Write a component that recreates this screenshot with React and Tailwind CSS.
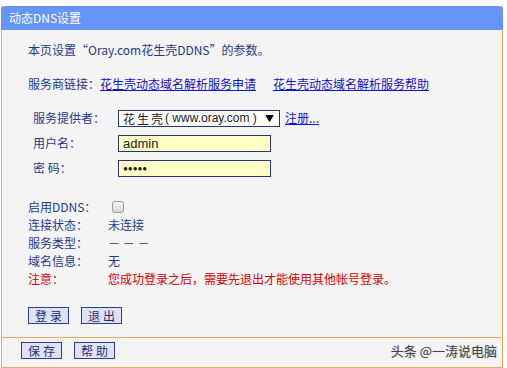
import React from 'react'

const FONT = { fontFamily: '"Noto Sans CJK SC", "DejaVu Sans", sans-serif' }
const ARIAL = { fontFamily: '"Liberation Sans", Arial, sans-serif' }

const STATUS = [
  { label: '连接状态：', value: '未连接' },
  { label: '服务类型：', value: '－ － －' },
  { label: '域名信息：', value: '无' },
]

function Btn({ children }) {
  return (
    <button
      type="button"
      className="w-[41px] h-[17px] border border-[#2b3f8c] bg-[#dfe2f7] text-[12px] leading-[15px] text-[#1f2f6e] tracking-[3px] pl-[3px]"
    >
      {children}
    </button>
  )
}

function FieldRow({ label, children, className = '' }) {
  return (
    <div className={`flex items-center pl-[5px] ${className}`}>
      <span className="w-[85px] shrink-0">{label}</span>
      {children}
    </div>
  )
}

export default function App() {
  return (
    <div className="w-[507px] h-[368px] bg-white pt-[6px] pl-px" style={FONT}>
      <div className="w-[502px] border-x border-b border-[#f0a860] bg-[#f4f4f4] text-[12px] text-[#1d3a8a]">
        {/* Titulo */}
        <div className="h-[24px] -mx-px bg-[#6495f7] rounded-t-[4px] pl-[8px] leading-[24px] text-white">
          动态DNS设置
        </div>

        <div className="px-[26px] leading-[18px]">
          <p className="mt-[11px]">本页设置“Oray.com花生壳DDNS”的参数。</p>

          <p className="mt-[16px] flex">
            <span>服务商链接：</span>
            <a className="text-[#1010c8] underline">花生壳动态域名解析服务申请</a>
            <a className="ml-[17px] text-[#1010c8] underline">花生壳动态域名解析服务帮助</a>
          </p>

          {/* Formulario */}
          <FieldRow label="服务提供者：" className="mt-[16px]">
            <div className="w-[162px] h-[17px] border border-[#24357a] bg-white flex items-center pl-[4px] pr-[5px] leading-[15px] text-[#222] whitespace-nowrap overflow-hidden">
              <span className="text-[12px] tracking-[2px]">花生壳</span>
              <span className="text-[12px]" style={ARIAL}>( www.oray.com )</span>
              <span className="ml-auto text-[9px] text-black">▼</span>
            </div>
            <a className="ml-[5px] text-[#1010c8] underline">注册...</a>
          </FieldRow>
          <FieldRow label="用户名：" className="mt-[7px]">
            <div
              className="w-[153px] h-[17px] border border-[#24357a] bg-[#ffffc4] pl-[4px] text-[13px] leading-[15px] text-[#222]"
              style={ARIAL}
            >
              admin
            </div>
          </FieldRow>
          <FieldRow label="密  码：" className="mt-[7px]">
            <div
              className="w-[153px] h-[17px] border border-[#24357a] bg-[#ffffc4] pl-[4px] text-[8px] leading-[15px] text-[#222]"
              style={ARIAL}
            >
              ●●●●●
            </div>
          </FieldRow>

          {/* Estado */}
          <div className="mt-[21px]">
            <div className="flex items-center">
              <span className="w-[84px]">启用DDNS：</span>
              <span className="w-[12px] h-[12px] rounded-[3px] border border-[#9a9a9a] bg-gradient-to-b from-[#f6f6f6] to-[#d8d8d8]" />
            </div>
            {STATUS.map(s => (
              <div key={s.label} className="flex">
                <span className="w-[80px]">{s.label}</span>
                <span>{s.value}</span>
              </div>
            ))}
            <div className="flex text-[#d40000]">
              <span className="w-[80px]">注意：</span>
              <span>您成功登录之后，需要先退出才能使用其他帐号登录。</span>
            </div>
          </div>

          <div className="mt-[19px] pb-[13px] flex gap-[12px]">
            <Btn>登录</Btn>
            <Btn>退出</Btn>
          </div>
        </div>

        {/* Rodape */}
        <div className="border-t border-[#f0a860] pt-[3px] pb-[6px] pl-[19px] pr-[5px] flex items-center gap-[12px]">
          <Btn>保存</Btn>
          <Btn>帮助</Btn>
          <span className="ml-auto text-[13px] text-[#444] [text-shadow:0_0_1px_#bbb]">头条 @一涛说电脑</span>
        </div>
      </div>
    </div>
  )
}
